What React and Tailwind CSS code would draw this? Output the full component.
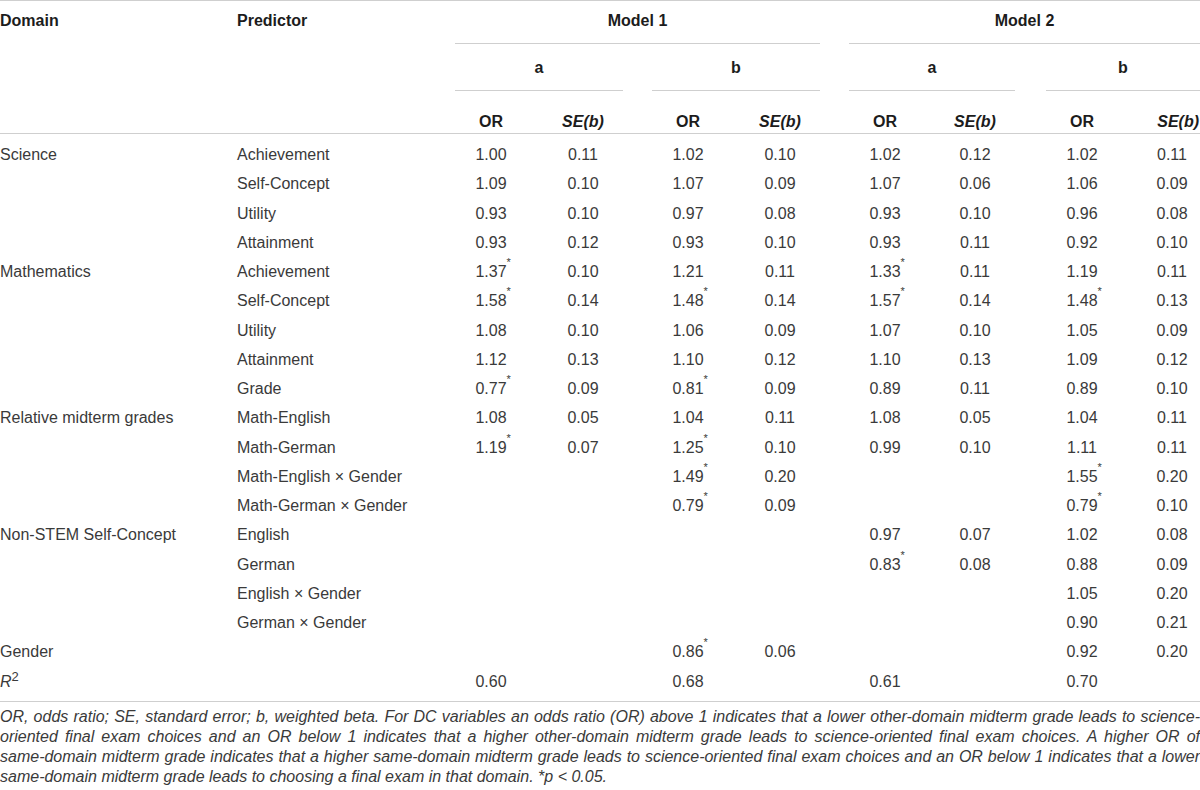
import React from "react";

const ROWS = [
  ["Science", "Achievement", ["1.00", "0.11"], ["1.02", "0.10"], ["1.02", "0.12"], ["1.02", "0.11"]],
  ["", "Self-Concept", ["1.09", "0.10"], ["1.07", "0.09"], ["1.07", "0.06"], ["1.06", "0.09"]],
  ["", "Utility", ["0.93", "0.10"], ["0.97", "0.08"], ["0.93", "0.10"], ["0.96", "0.08"]],
  ["", "Attainment", ["0.93", "0.12"], ["0.93", "0.10"], ["0.93", "0.11"], ["0.92", "0.10"]],
  ["Mathematics", "Achievement", ["1.37*", "0.10"], ["1.21", "0.11"], ["1.33*", "0.11"], ["1.19", "0.11"]],
  ["", "Self-Concept", ["1.58*", "0.14"], ["1.48*", "0.14"], ["1.57*", "0.14"], ["1.48*", "0.13"]],
  ["", "Utility", ["1.08", "0.10"], ["1.06", "0.09"], ["1.07", "0.10"], ["1.05", "0.09"]],
  ["", "Attainment", ["1.12", "0.13"], ["1.10", "0.12"], ["1.10", "0.13"], ["1.09", "0.12"]],
  ["", "Grade", ["0.77*", "0.09"], ["0.81*", "0.09"], ["0.89", "0.11"], ["0.89", "0.10"]],
  ["Relative midterm grades", "Math-English", ["1.08", "0.05"], ["1.04", "0.11"], ["1.08", "0.05"], ["1.04", "0.11"]],
  ["", "Math-German", ["1.19*", "0.07"], ["1.25*", "0.10"], ["0.99", "0.10"], ["1.11", "0.11"]],
  ["", "Math-English \u00d7 Gender", ["", ""], ["1.49*", "0.20"], ["", ""], ["1.55*", "0.20"]],
  ["", "Math-German \u00d7 Gender", ["", ""], ["0.79*", "0.09"], ["", ""], ["0.79*", "0.10"]],
  ["Non-STEM Self-Concept", "English", ["", ""], ["", ""], ["0.97", "0.07"], ["1.02", "0.08"]],
  ["", "German", ["", ""], ["", ""], ["0.83*", "0.08"], ["0.88", "0.09"]],
  ["", "English \u00d7 Gender", ["", ""], ["", ""], ["", ""], ["1.05", "0.20"]],
  ["", "German \u00d7 Gender", ["", ""], ["", ""], ["", ""], ["0.90", "0.21"]],
  ["Gender", "", ["", ""], ["0.86*", "0.06"], ["", ""], ["0.92", "0.20"]],
  ["R2", "", ["0.60", ""], ["0.68", ""], ["0.61", ""], ["0.70", ""]],
];

function Num({ v }) {
  if (!v) return null;
  const star = v.endsWith("*");
  const n = star ? v.slice(0, -1) : v;
  return (
    <span className="relative inline-block">
      {n}
      {star && (
        <span className="absolute left-full top-[-5px] text-[11px] leading-[20px]">*</span>
      )}
    </span>
  );
}

function Pair({ pair, last }) {
  return (
    <>
      <div className="w-[72px] text-center">
        <Num v={pair[0]} />
      </div>
      <div className="flex-1" />
      <div className={last ? "w-[56px] text-center" : "w-[80px] text-center"}>
        <Num v={pair[1]} />
      </div>
    </>
  );
}

function DomainText({ d }) {
  if (d === "R2") {
    return (
      <span className="relative">
        <i>R</i>
        <span className="relative top-[-6px] text-[13px]">2</span>
      </span>
    );
  }
  return d;
}

function HeadPair({ last }) {
  return (
    <>
      <div className="w-[72px] text-center">OR</div>
      <div className="flex-1" />
      <div className={last ? "w-[56px] text-right italic pr-[1px]" : "w-[80px] text-center italic"}>SE(b)</div>
    </>
  );
}

const FOOT = [
  "OR, odds ratio; SE, standard error; b, weighted beta. For DC variables an odds ratio (OR) above 1 indicates that a lower other-domain midterm grade leads to science-",
  "oriented final exam choices and an OR below 1 indicates that a higher other-domain midterm grade leads to science-oriented final exam choices. A higher OR of",
  "same-domain midterm grade indicates that a higher same-domain midterm grade leads to science-oriented final exam choices and an OR below 1 indicates that a lower",
];

export default function App() {
  return (
    <div className="w-[1200px] h-[790px] overflow-hidden bg-white text-[16px] text-[#3a3a3a] font-['Liberation_Sans',Arial,Helvetica,sans-serif]">
      {/* Header */}
      <div className="flex border-t border-b border-[#cfcfcf] font-bold text-[#1c1c1c]">
        <div className="w-[237px] shrink-0 leading-[40px]">Domain</div>
        <div className="w-[218px] shrink-0 leading-[40px]">Predictor</div>
        <div className="w-[365px] shrink-0 flex flex-col">
          <div className="h-[43px] border-b border-[#cfcfcf] text-center leading-[40px]">Model 1</div>
          <div className="flex">
            <div className="w-[168px] h-[47px] border-b border-[#cfcfcf] pt-[2px] leading-[44px] text-center">a</div>
            <div className="w-[168px] ml-[29px] h-[47px] border-b border-[#cfcfcf] pt-[2px] leading-[44px] text-center">b</div>
          </div>
          <div className="flex h-[42px] pt-[22px] leading-[18px]">
            <div className="w-[168px] flex">
              <HeadPair />
            </div>
            <div className="w-[168px] ml-[29px] flex">
              <HeadPair />
            </div>
          </div>
        </div>
        <div className="w-[351px] ml-[29px] shrink-0 flex flex-col">
          <div className="h-[43px] border-b border-[#cfcfcf] text-center leading-[40px]">Model 2</div>
          <div className="flex">
            <div className="w-[166px] h-[47px] border-b border-[#cfcfcf] pt-[2px] leading-[44px] text-center">a</div>
            <div className="w-[154px] ml-[31px] h-[47px] border-b border-[#cfcfcf] pt-[2px] leading-[44px] text-center">b</div>
          </div>
          <div className="flex h-[42px] pt-[22px] leading-[18px]">
            <div className="w-[166px] flex">
              <HeadPair />
            </div>
            <div className="w-[154px] ml-[31px] flex">
              <HeadPair last />
            </div>
          </div>
        </div>
      </div>

      {/* Body */}
      <div className="pt-[6px] pb-[5px] border-b border-[#cfcfcf]">
        {ROWS.map((r, i) => (
          <div key={i} className="flex h-[29.25px] leading-[29.25px]">
            <div className="w-[237px] shrink-0">
              <DomainText d={r[0]} />
            </div>
            <div className="w-[218px] shrink-0">{r[1]}</div>
            <div className="w-[168px] shrink-0 flex">
              <Pair pair={r[2]} />
            </div>
            <div className="w-[168px] ml-[29px] shrink-0 flex">
              <Pair pair={r[3]} />
            </div>
            <div className="w-[166px] ml-[29px] shrink-0 flex">
              <Pair pair={r[4]} />
            </div>
            <div className="w-[154px] ml-[31px] shrink-0 flex">
              <Pair pair={r[5]} last />
            </div>
          </div>
        ))}
      </div>

      {/* Footnote */}
      <div className="pt-[5px] italic leading-[20px]">
        {FOOT.map((l, i) => (
          <div key={i} className="text-justify [text-align-last:justify] whitespace-nowrap">
            {l}
          </div>
        ))}
        <div>
          same-domain midterm grade leads to choosing a final exam in that domain. *p &lt; 0.05.
        </div>
      </div>
    </div>
  );
}
